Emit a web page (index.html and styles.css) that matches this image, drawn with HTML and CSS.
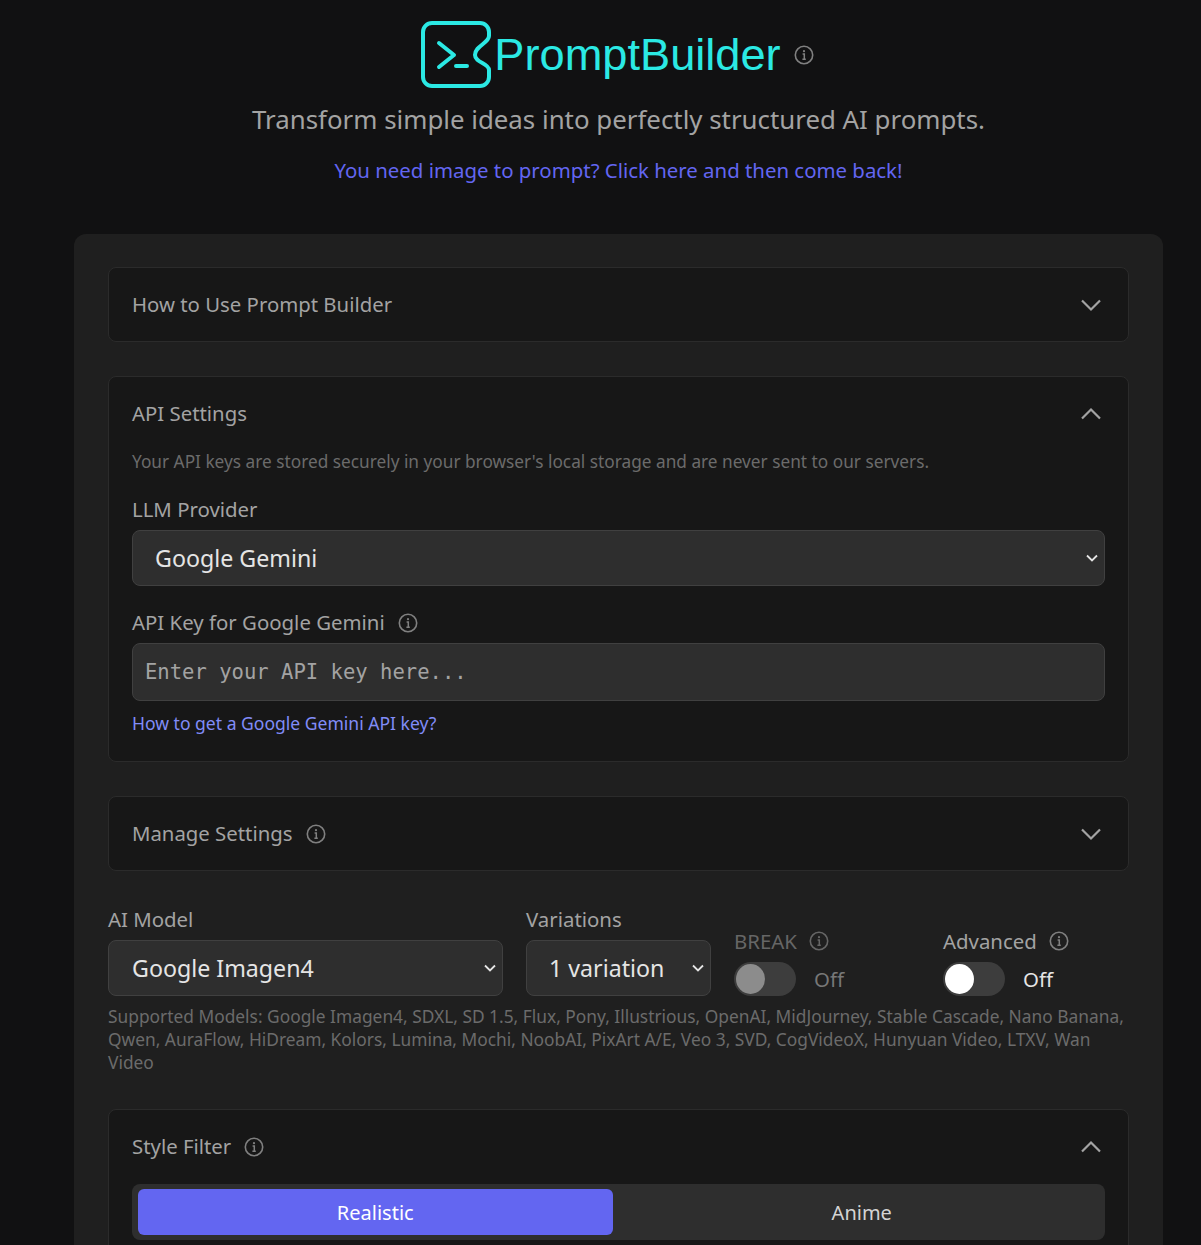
FILE: index.html
```html
<!DOCTYPE html>
<html lang="en">
<head>
    <meta charset="UTF-8">
    <meta name="viewport" content="width=device-width, initial-scale=1.0">
    <title>PromptBuilder</title>
    <link rel="stylesheet" href="styles.css">
</head>
<body>
    <svg class="icon-defs" width="0" height="0">
        <symbol id="info" viewBox="0 0 20 20">
            <circle cx="10" cy="10" r="8.7" fill="none" stroke="currentColor" stroke-width="1.6"/>
            <path d="M8.6 9h1.700v5M8.400 14.200h3.400" fill="none" stroke="currentColor" stroke-width="1.500"/>
            <circle cx="10" cy="6.200" r="1.100" fill="currentColor"/>
        </symbol>
        <symbol id="down" viewBox="0 0 20 20">
            <path d="M1 5.500 10 14.500l9-9" fill="none" stroke="currentColor" stroke-width="2.200"/>
        </symbol>
        <symbol id="up" viewBox="0 0 20 20">
            <path d="M1 14.500 10 5.500l9 9" fill="none" stroke="currentColor" stroke-width="2.200"/>
        </symbol>
    </svg>

    <header class="hero">
        <div class="brand">
            <svg class="logo" viewBox="0 0 71 70" width="71" height="70">
                <path d="M11 3H59a9 9 0 0 1 9 9V16C68 23 54 26 54 35C54 43 68 43 68 50V57a9 9 0 0 1-9 9H11a9 9 0 0 1-9-9V12a9 9 0 0 1 9-9z" fill="none" stroke="#2be9e4" stroke-width="4"/>
                <path d="M18 23l15 12-15 12M35 46h11" fill="none" stroke="#2be9e4" stroke-width="4" stroke-linecap="round" stroke-linejoin="round"/>
            </svg>
            <h1 class="brand-name">PromptBuilder</h1>
            <svg class="info brand-info"><use href="#info"/></svg>
        </div>
        <p class="tagline">Transform simple ideas into perfectly structured AI prompts.</p>
        <a class="hero-link" href="#">You need image to prompt? Click here and then come back!</a>
    </header>

    <main class="panel">
        <section class="card card-closed">
            <div class="card-head">
                <span class="card-title">How to Use Prompt Builder</span>
                <svg class="chevron"><use href="#down"/></svg>
            </div>
        </section>

        <section class="card card-api">
            <div class="card-head">
                <span class="card-title">API Settings</span>
                <svg class="chevron"><use href="#up"/></svg>
            </div>
            <p class="hint">Your API keys are stored securely in your browser's local storage and are never sent to our servers.</p>
            <label class="field-label">LLM Provider</label>
            <div class="select">
                <span>Google Gemini</span>
                <svg class="select-arrow" viewBox="0 0 12 8"><path d="M1 1.500 6 6.500l5-5" fill="none" stroke="currentColor" stroke-width="1.800"/></svg>
            </div>
            <label class="field-label label-key">API Key for Google Gemini <svg class="info"><use href="#info"/></svg></label>
            <input class="key-input" type="text" placeholder="Enter your API key here...">
            <a class="key-link" href="#">How to get a Google Gemini API key?</a>
        </section>

        <section class="card card-closed">
            <div class="card-head">
                <span class="card-title">Manage Settings <svg class="info"><use href="#info"/></svg></span>
                <svg class="chevron"><use href="#down"/></svg>
            </div>
        </section>

        <div class="model-row">
            <div class="model-col">
                <label class="field-label">AI Model</label>
                <div class="select">
                    <span>Google Imagen4</span>
                    <svg class="select-arrow" viewBox="0 0 12 8"><path d="M1 1.500 6 6.500l5-5" fill="none" stroke="currentColor" stroke-width="1.800"/></svg>
                </div>
            </div>
            <div class="variation-col">
                <label class="field-label">Variations</label>
                <div class="select">
                    <span>1 variation</span>
                    <svg class="select-arrow" viewBox="0 0 12 8"><path d="M1 1.500 6 6.500l5-5" fill="none" stroke="currentColor" stroke-width="1.800"/></svg>
                </div>
            </div>
            <div class="toggle-col toggle-off">
                <label class="toggle-label">BREAK <svg class="info"><use href="#info"/></svg></label>
                <div class="toggle-line">
                    <span class="toggle"><span class="knob"></span></span>
                    <span class="toggle-text">Off</span>
                </div>
            </div>
            <div class="toggle-col toggle-last">
                <label class="toggle-label">Advanced <svg class="info"><use href="#info"/></svg></label>
                <div class="toggle-line">
                    <span class="toggle"><span class="knob"></span></span>
                    <span class="toggle-text">Off</span>
                </div>
            </div>
        </div>
        <p class="supported">Supported Models: Google Imagen4, SDXL, SD 1.5, Flux, Pony, Illustrious, OpenAI, MidJourney, Stable Cascade, Nano Banana, Qwen, AuraFlow, HiDream, Kolors, Lumina, Mochi, NoobAI, PixArt A/E, Veo 3, SVD, CogVideoX, Hunyuan Video, LTXV, Wan Video</p>

        <section class="card card-style">
            <div class="card-head">
                <span class="card-title">Style Filter <svg class="info"><use href="#info"/></svg></span>
                <svg class="chevron"><use href="#up"/></svg>
            </div>
            <div class="tabs">
                <button class="tab tab-active">Realistic</button>
                <button class="tab">Anime</button>
            </div>
        </section>
    </main>
</body>
</html>
```

FILE: styles.css
```css
html {
    height: 1245px;
    overflow: hidden;
}

body {
    margin: 0;
    height: 1245px;
    overflow: hidden;
    background-color: #111112;
    color: #e5e5e5;
    font-family: "Noto Sans", "Open Sans", Arial, sans-serif;
}

.icon-defs {
    display: block;
    height: 0;
}

a {
    text-decoration: none;
}

.hero {
    display: flex;
    flex-direction: column;
    align-items: center;
    width: 1089px;
    height: 234px;
    margin-left: 74px;
    padding-top: 20px;
    box-sizing: border-box;
}

.brand {
    display: flex;
    align-items: center;
    height: 70px;
    margin-right: 2px;
}

.logo {
    margin-right: 2px;
}

.brand-name {
    margin: 0;
    font-family: "Liberation Sans", Arial, sans-serif;
    font-size: 45.200px;
    font-weight: 400;
    color: #2be9e4;
}

.brand-info {
    margin-left: 14px;
}

.tagline {
    margin: 11px 0 0;
    font-size: 25.850px;
    line-height: 36px;
    color: #a3a3a3;
}

.hero-link {
    margin-top: 19px;
    font-size: 20.400px;
    line-height: 28px;
    color: #6366f1;
}

.panel {
    width: 1089px;
    margin-left: 74px;
    padding: 33px 34px;
    box-sizing: border-box;
    background-color: #1f1f1f;
    border-radius: 12px;
}

.card {
    margin-bottom: 34px;
    padding: 0 23px;
    background-color: #171717;
    border: 1px solid #2b2b2b;
    border-radius: 8px;
}

.card-closed {
    height: 75px;
    box-sizing: border-box;
}

.card-api {
    height: 386px;
    box-sizing: border-box;
}

.card-head {
    display: flex;
    align-items: center;
    justify-content: space-between;
    height: 73px;
}

.card-style {
    padding-bottom: 24px;
}

.card-style .card-head {
    height: 74px;
}

.card-title {
    display: flex;
    align-items: center;
    padding-bottom: 2px;
    font-size: 20.350px;
    color: #a3a3a3;
}

.card-title .info {
    margin-top: 2px;
}

.chevron {
    width: 20px;
    height: 20px;
    margin-right: 4px;
    color: #a3a3a3;
}

.info {
    width: 20px;
    height: 20px;
    margin-left: 13px;
    color: #808080;
}

.hint {
    margin: 0;
    font-size: 17.250px;
    line-height: 24px;
    color: #6b6b6b;
}

.field-label {
    display: flex;
    align-items: center;
    margin: 22px 0 6px;
    height: 26px;
    padding-bottom: 2px;
    font-size: 20.400px;
    color: #a3a3a3;
}

.select {
    display: flex;
    align-items: center;
    justify-content: space-between;
    height: 56px;
    padding: 0 6px 0 22px;
    box-sizing: border-box;
    background-color: #2e2e2e;
    border: 1px solid #404040;
    border-radius: 8px;
    font-size: 23.200px;
    color: #e5e5e5;
}

.select-arrow {
    width: 12px;
    height: 8px;
    color: #e5e5e5;
}

.label-key {
    margin-top: 23px;
}

.label-key .info {
    margin-top: 2px;
}

.key-input {
    display: block;
    width: 100%;
    height: 58px;
    padding: 0 12px;
    box-sizing: border-box;
    background-color: #2e2e2e;
    border: 1px solid #404040;
    border-radius: 8px;
    font-family: "DejaVu Sans Mono", "Liberation Mono", monospace;
    font-size: 20.550px;
}

.key-input::placeholder {
    color: #a3a3a3;
    opacity: 1;
}

.key-link {
    display: block;
    margin-top: 8px;
    font-size: 17.550px;
    line-height: 28px;
    color: #818cf8;
}

.model-row {
    display: flex;
}

.model-col {
    flex: none;
    width: 395px;
    margin-right: 23px;
}

.model-col .select {
    padding-left: 23px;
}

.variation-col {
    flex: none;
    width: 185px;
    margin-right: 23px;
}

.model-row .field-label {
    margin: 0 0 7px;
    height: 28px;
    padding-bottom: 0;
}

.toggle-col {
    flex: none;
    width: 209px;
    padding-top: 22px;
}

.toggle-last {
    width: 186px;
}

.toggle-label {
    display: flex;
    align-items: center;
    font-size: 20.400px;
    line-height: 28px;
    color: #a3a3a3;
}

.toggle-label .info {
    margin-left: 12px;
}

.toggle-line {
    display: flex;
    align-items: center;
    margin-top: 7px;
    height: 34px;
}

.toggle {
    display: block;
    width: 62px;
    height: 34px;
    padding: 2px;
    box-sizing: border-box;
    background-color: #3d3d3d;
    border-radius: 17px;
}

.knob {
    display: block;
    width: 29px;
    height: 30px;
    border-radius: 50%;
    background-color: #fff;
}

.toggle-text {
    margin-left: 18px;
    font-size: 20.400px;
    color: #e5e5e5;
}

.toggle-off .toggle-label,
.toggle-off .info {
    color: #666;
}

.toggle-off .toggle-text {
    color: #777;
}

.toggle-off .knob {
    background-color: #8c8c8c;
}

.supported {
    margin: 9px 0 35px;
    font-size: 17.350px;
    line-height: 23px;
    color: #6b6b6b;
}

.tabs {
    display: flex;
    gap: 12px;
    padding: 5px 6px;
    background-color: #2e2e2e;
    border-radius: 8px;
}

.tab {
    flex: 1;
    height: 46px;
    padding: 0;
    background: none;
    border: none;
    border-radius: 6px;
    font-family: inherit;
    font-size: 20px;
    color: #d4d4d4;
}

.tab-active {
    background-color: #6366f1;
    color: #fff;
}
```
